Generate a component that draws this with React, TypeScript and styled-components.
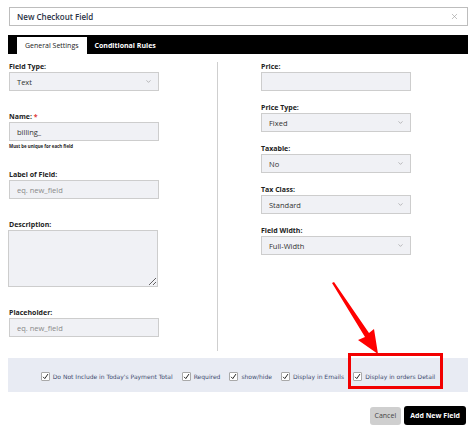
import React from 'react'
import styled, { createGlobalStyle } from 'styled-components'
import { ChevronDown, X } from 'lucide-react'

const GlobalStyle = createGlobalStyle`
  html, body { margin: 0; padding: 0; background: #fff; }
  body { font-family: "Open Sans", "Liberation Sans", sans-serif; color: #222; }
  * { box-sizing: border-box; }
`

const leftFields = [
  { label: 'Field Type:', kind: 'select', value: 'Text' },
  { label: 'Name:', kind: 'input', value: 'billing_', required: true, help: 'Must be unique for each field' },
  { label: 'Label of Field:', kind: 'input', placeholder: 'eq. new_field' },
  { label: 'Description:', kind: 'textarea' },
  { label: 'Placeholder:', kind: 'input', placeholder: 'eq. new_field' },
]

const rightFields = [
  { label: 'Price:', kind: 'input' },
  { label: 'Price Type:', kind: 'select', value: 'Fixed' },
  { label: 'Taxable:', kind: 'select', value: 'No' },
  { label: 'Tax Class:', kind: 'select', value: 'Standard' },
  { label: 'Field Width:', kind: 'select', value: 'Full-Width' },
]

const options = [
  'Do Not Include in Today\'s Payment Total',
  'Required',
  'show/hide',
  'Display in Emails',
  'Display in orders Detail',
]

type FieldDef = {
  label: string
  kind: string
  value?: string
  placeholder?: string
  required?: boolean
  help?: string
}

const renderField = (f: FieldDef, wide: boolean) => (
  <Field key={f.label} wide={wide}>
    <Label>
      {f.label}
      {f.required && <Star> *</Star>}
    </Label>
    {f.kind === 'select' && (
      <Select>
        <span>{f.value}</span>
        <ChevronDown size={7} strokeWidth={1.6} color="#777" />
      </Select>
    )}
    {f.kind === 'input' && (
      <Input placeholder={f.placeholder} defaultValue={f.value} />
    )}
    {f.kind === 'textarea' && <TextArea />}
    {f.help && <Help>{f.help}</Help>}
  </Field>
)

const Check = () => (
  <svg width="7" height="7" viewBox="0 0 10 10">
    <path d="M1.5 5.5 L4 8 L8.5 1.5" fill="none" stroke="#222" strokeWidth="1.4" />
  </svg>
)

const App = () => {
  return (
    <Page>
      <GlobalStyle />
      <Header>
        <Title>New Checkout Field</Title>
        <X size={9} strokeWidth={1.6} color="#999" />
      </Header>

      <Tabs>
        <Tab active>General Settings</Tab>
        <Tab>Conditional Rules</Tab>
      </Tabs>

      <Body>
        <Column>{leftFields.map((f) => renderField(f, true))}</Column>
        <Divider />
        <RightColumn>{rightFields.map((f) => renderField(f, false))}</RightColumn>
      </Body>

      <OptionsBar>
        {options.map((o, i) => (
          <Option key={o}>
            <Box><Check /></Box>
            <OptionText>{o}</OptionText>
            {i === options.length - 1 && <Highlight />}
          </Option>
        ))}
      </OptionsBar>

      <Actions>
        <Button>Cancel</Button>
        <Button primary>Add New Field</Button>
      </Actions>

      <Arrow width="70" height="90" viewBox="0 0 70 90">
        <polygon points="9,5 11,4 46,55 51,51 55,76 35,62 42,59" fill="#f00" />
      </Arrow>
    </Page>
  )
}

export default App

const Page = styled.div`
position: relative;
width: 476px;
height: 434px;
padding: 7px 8px 0 8px;
`
const Header = styled.div`
margin-left: 1px;
height: 19px;
border: 1px solid #bdbdbd;
display: flex;
align-items: center;
justify-content: space-between;
padding: 0 8px 0 7px;
`
const Title = styled.div`
font-size: 8px;
font-weight: 600;
color: #2b3346;
`
const Tabs = styled.div`
margin-top: 9px;
height: 19px;
background: #000;
display: flex;
align-items: flex-end;
padding-left: 9px;
`
const Tab = styled.div<{ active?: boolean }>`
height: 17px;
display: flex;
align-items: center;
padding: 0 8px;
font-size: 7px;
font-weight: ${({ active }) => (active ? 400 : 700)};
color: ${({ active }) => (active ? '#222' : '#fff')};
background: ${({ active }) => (active ? '#fff' : 'transparent')};
`
const Body = styled.div`
display: flex;
padding-top: 8px;
height: 304px;
`
const Column = styled.div`
width: 209px;
padding-left: 1px;
`
const RightColumn = styled.div`
padding-left: 43px;
`
const Divider = styled.div`
width: 1px;
height: 289px;
background: #cfcfcf;
`
const Field = styled.div<{ wide: boolean }>`
width: 150px;
margin-bottom: ${({ wide }) => (wide ? '21px' : '12px')};
`
const Label = styled.div`
height: 10px;
line-height: 10px;
font-size: 7px;
font-weight: 700;
color: #222;
`
const Star = styled.span`
color: #e03b3b;
`
const controlBase = `
width: 150px;
height: 19px;
border: 1px solid #cdcdcd;
background: #f0f1f5;
font-family: "Open Sans", "Liberation Sans", sans-serif;
font-size: 7.5px;
color: #333;
`
const Select = styled.div`
${controlBase}
display: flex;
align-items: center;
justify-content: space-between;
padding: 0 6px 0 7px;
`
const Input = styled.input`
${controlBase}
display: block;
padding: 0 7px;
outline: none;
&::placeholder { color: #8a8a8a; }
`
const TextArea = styled.textarea`
${controlBase}
display: block;
height: 57px;
resize: both;
outline: none;
margin-left: -1px;
`
const Help = styled.div`
margin-top: 2px;
height: 6px;
line-height: 6px;
font-size: 4.4px;
font-weight: 700;
color: #222;
`
const OptionsBar = styled.div`
height: 34px;
background: #e8ebf3;
display: flex;
justify-content: center;
align-items: center;
gap: 9px;
padding-top: 3px;
`
const Option = styled.div`
position: relative;
display: flex;
align-items: center;
gap: 3px;
`
const Box = styled.div`
width: 9px;
height: 9px;
background: #fff;
border: 1px solid #a9a9a9;
border-radius: 1px;
display: flex;
align-items: center;
justify-content: center;
`
const OptionText = styled.span`
font-family: "DejaVu Sans", Verdana, sans-serif;
font-size: 6px;
color: #3f4b70;
white-space: nowrap;
`
const Highlight = styled.div`
position: absolute;
top: -19px;
bottom: -8px;
left: -5px;
right: -8px;
border: 3px solid #f20000;
`
const Actions = styled.div`
display: flex;
justify-content: flex-end;
align-items: center;
gap: 3px;
margin-top: 14px;
padding-right: 2px;
`
const Button = styled.button<{ primary?: boolean }>`
height: ${({ primary }) => (primary ? '19px' : '18px')};
padding: ${({ primary }) => (primary ? '0 6px' : '0 5px')};
border: 0;
border-radius: 3px;
background: ${({ primary }) => (primary ? '#000' : '#cfcfcf')};
color: ${({ primary }) => (primary ? '#fff' : '#444')};
font-family: "Open Sans", "Liberation Sans", sans-serif;
font-size: 7px;
font-weight: ${({ primary }) => (primary ? 700 : 400)};
cursor: pointer;
`
const Arrow = styled.svg`
position: absolute;
left: 323px;
top: 278px;
`
